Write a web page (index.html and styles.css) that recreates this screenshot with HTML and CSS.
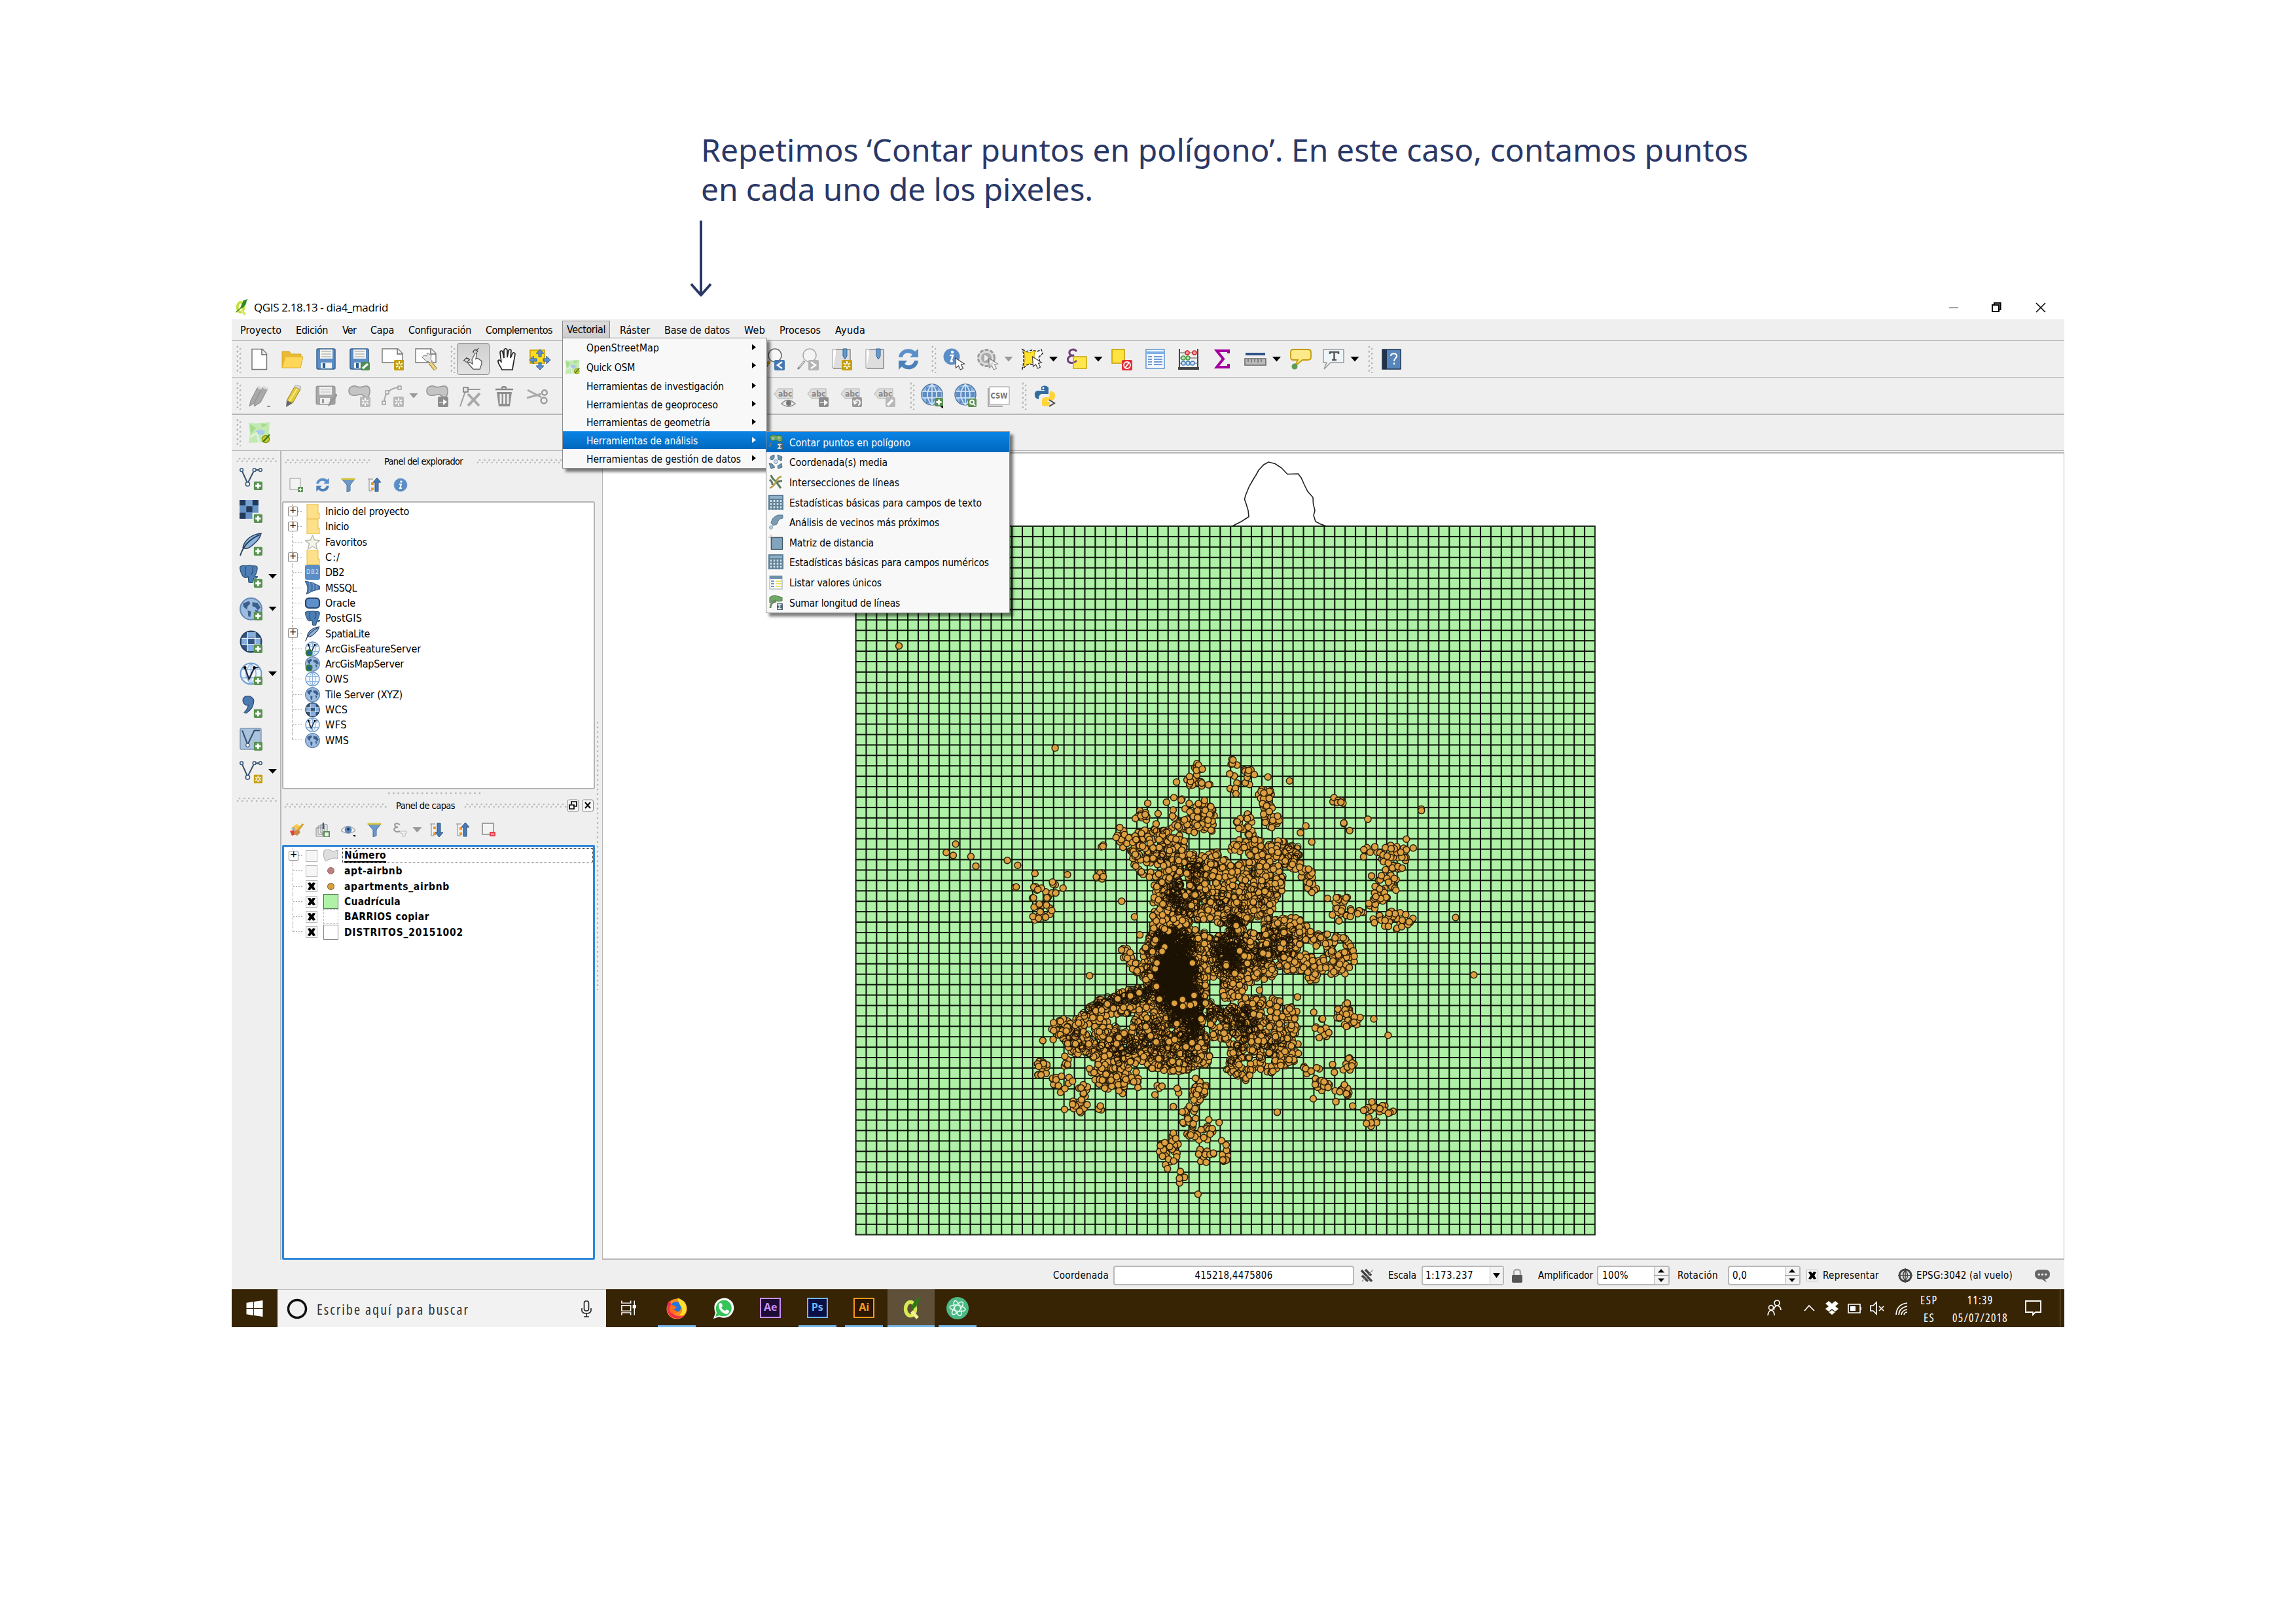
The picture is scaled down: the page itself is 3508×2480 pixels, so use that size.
FILE: index.html
```html
<!DOCTYPE html>
<html lang="es">
<head>
<meta charset="utf-8">
<title>QGIS 2.18.13 - dia4_madrid</title>
<link rel="stylesheet" href="styles.css">
</head>
<body>
<svg class="defs" aria-hidden="true">
<defs>
<symbol id="plus" viewBox="0 0 13 13"><rect width="13" height="13" rx="2" fill="#5a9152"/><path d="M6.500 2.500v8M2.500 6.500h8" stroke="#fff" stroke-width="2.800"/></symbol>
<symbol id="star" viewBox="0 0 16 16"><rect width="16" height="16" rx="2" fill="#c59f0c"/><path d="M8 2v12M3 5l10 6M13 5L3 11" stroke="#fff" stroke-width="2"/><circle cx="8" cy="8" r="2" fill="#c59f0c"/></symbol>
<symbol id="gstar" viewBox="0 0 16 16"><rect width="16" height="16" rx="2" fill="#b9b9b9"/><path d="M8 2v12M3 5l10 6M13 5L3 11" stroke="#fff" stroke-width="2"/><circle cx="8" cy="8" r="2" fill="#b9b9b9"/></symbol>
<symbol id="new" viewBox="0 0 34 34"><path d="M6 1.500h16l6.500 7V32.500H6z" fill="#fff" stroke="#777" stroke-width="1.500"/><path d="M21 2v8h7.500" fill="#eee" stroke="#666" stroke-width="1.500"/></symbol>
<symbol id="open" viewBox="0 0 34 34"><path d="M1 30V5h11l3 4h15v5" fill="#e9bb34" stroke="#d5a72a"/><path d="M1 30l5-17h27l-4 17z" fill="#ffd758" stroke="#dfb035"/></symbol>
<symbol id="save" viewBox="0 0 34 34"><rect x="3" y="1" width="28" height="31" rx="2" fill="#5b8dc6" stroke="#35628f" stroke-width="1.500"/><rect x="8" y="2" width="19" height="14" fill="#f3f3f1"/><path d="M10 5h15M10 9h15M10 13h15" stroke="#999" stroke-width="1.200"/><rect x="9" y="22" width="17" height="9" fill="#f1f1ef"/><rect x="12" y="23" width="4" height="7" fill="#2b5a94"/></symbol>
<symbol id="saveas" viewBox="0 0 34 34"><use href="#save"/><rect x="19" y="21" width="14" height="13" rx="2" fill="#4c8b51"/><path d="M22 31l8-7" stroke="#fff" stroke-width="3.500"/></symbol>
<symbol id="print" viewBox="0 0 34 34"><path d="M1 1h24l7 7v14H1z" fill="#fff" stroke="#777" stroke-width="1.400"/><path d="M24 1v8h8" fill="#eee" stroke="#666" stroke-width="1.400"/><use href="#star" x="19" y="18" width="16" height="16"/></symbol>
<symbol id="composer" viewBox="0 0 34 34"><path d="M1 1h24l7 7v14H1z" fill="#fff" stroke="#777" stroke-width="1.400"/><path d="M24 1v8h8" fill="#eee" stroke="#666" stroke-width="1.400"/><path d="M19 7l-1 5-4-1-3 3 6 6 5 1 4 4 3-3-5-5 1-6z" fill="#e5e5e5" stroke="#777"/><path d="M23 22l9 11" stroke="#8f7a35" stroke-width="6"/><path d="M23 22l9 11" stroke="#ecd47e" stroke-width="4"/></symbol>
<symbol id="touch" viewBox="0 0 34 34"><path d="M15 18l5-10q2-1 2.500 1L21 17l3-1 6 4 .5 4-3 9H17l-8-9q0-2 3-2l4 3z" fill="#fff" stroke="#555" stroke-width="1.300"/><path d="M2 20l5-5 4 3-3 4-4-1M17 7q0-5 5-4 3 2 0 5M22 4l4-5" fill="none" stroke="#333" stroke-width="1.600" stroke-dasharray="3 1"/></symbol>
<symbol id="hand" viewBox="0 0 34 34"><path d="M10 33c-2-5-7-10-6-14 2-2 4 0 5 3L7 6c1-3 4-2 4 0l2 9V3c1-3 4-3 5 0v11l2-10c1-3 4-2 4 0l-1 11 3-7c1-2 4-1 4 1-1 8-3 15-4 24z" fill="#fff" stroke="#222" stroke-width="1.700"/></symbol>
<symbol id="move" viewBox="0 0 34 34"><rect x="2" y="3" width="22" height="20" fill="#fddb1f" stroke="#c79b00" stroke-width="1.500"/><path d="M17 2l6 6h-4v5h-4V8h-4zM17 33l6-6h-4v-5h-4v5h-4zM1 18l6-6v4h5v4H7v4zM33 18l-6-6v4h-5v4h5v4z" fill="#5f90cd" stroke="#2c5a8f"/></symbol>
<symbol id="zoomlast" viewBox="0 0 34 34"><ellipse cx="17" cy="11" rx="10" ry="10" fill="#f7f7f7" stroke="#666" stroke-width="1.500"/><path d="M9 20L1 31" stroke="#555" stroke-width="4"/><path d="M9 20l-4 6" stroke="#dba20e" stroke-width="3"/><rect x="16" y="18" width="16" height="16" rx="2" fill="#4578ae"/><path d="M28 21l-7 5 7 5" fill="none" stroke="#fff" stroke-width="2.500"/></symbol>
<symbol id="zoomnext" viewBox="0 0 34 34"><ellipse cx="19" cy="11" rx="10" ry="10" fill="#f4f4f4" stroke="#aaa" stroke-width="1.500"/><path d="M11 20L1 32" stroke="#8a8a8a" stroke-width="3"/><path d="M10 21L3 29" stroke="#ddd" stroke-width="1.500"/><rect x="17" y="18" width="16" height="16" rx="2" fill="#b4b4b4"/><path d="M21 21l7 5-7 5" fill="none" stroke="#fff" stroke-width="2.500"/></symbol>
<symbol id="book" viewBox="0 0 34 34"><path d="M3 2h6v28H3z" fill="#fff" stroke="#999"/><path d="M9 2h21v29H4" fill="#dedede" stroke="#888" stroke-width="1.500"/><path d="M19 1h6v11l-3 5-3-5z" fill="#6699cc" stroke="#2f5f95"/></symbol>
<symbol id="booknew" viewBox="0 0 34 34"><use href="#book"/><use href="#star" x="17" y="18" width="16" height="16"/></symbol>
<symbol id="refresh" viewBox="0 0 34 34"><path d="M2 14C3 1 20-2 27 5l5-4v13H19l4-4C18 5 9 7 8 14z" fill="#5a8fca"/><path d="M32 19c-1 14-18 17-25 9l-5 5V19h13l-4 5c5 4 13 3 15-5z" fill="#4a7fba"/></symbol>
<symbol id="ptr" viewBox="0 0 16 20"><path d="M1 1l1 15 4-3 3 6 4-2-3-6 5-1z" fill="#fff" stroke="#444" stroke-width="1.200"/></symbol>
<symbol id="info" viewBox="0 0 34 34"><circle cx="13" cy="13" r="12.500" fill="#5b8dc7"/><circle cx="14" cy="6" r="2.200" fill="#fff"/><path d="M10 11h5l-3 9h3" stroke="#fff" stroke-width="2.500" fill="none"/><use href="#ptr" x="17" y="14" width="17" height="20"/></symbol>
<symbol id="gear" viewBox="0 0 34 34"><circle cx="15" cy="15" r="12.500" fill="#ddd" stroke="#9b9b9b" stroke-width="3" stroke-dasharray="6 2"/><circle cx="15" cy="15" r="8" fill="#aaa"/><path d="M12 10l8 5-8 5z" fill="#eee"/><g opacity=".55"><use href="#ptr" x="17" y="14" width="17" height="20"/></g></symbol>
<symbol id="select" viewBox="0 0 34 34"><path d="M2 2l6 3 9-2 8 2 6-3 2 6-6 6 2 8-4 3H10l-8 7 2-10V9z" fill="#fff" stroke="#222" stroke-dasharray="4 2" stroke-width="1.500"/><path d="M5 5l8 2 8-3-1 8 3 8-7 3-9 2-3 4 2-12z" fill="#ffe22e" stroke="#c9a500"/><use href="#ptr" x="16" y="12" width="17" height="20"/></symbol>
<symbol id="eps" viewBox="0 0 34 34"><path d="M16 5C12 0 4 2 5 8c1 3 4 4 7 3-7 0-11 4-9 9 3 4 10 3 13-1" fill="none" stroke="#71407a" stroke-width="3"/><rect x="11" y="13" width="20" height="18" fill="#ffe64d" stroke="#c9a500" stroke-width="1.500"/><path d="M16 19l-4 3" stroke="#71407a" stroke-width="2.500"/></symbol>
<symbol id="desel" viewBox="0 0 34 34"><rect x="2" y="2" width="19" height="21" fill="#ffe33e" stroke="#c29b00" stroke-width="1.500"/><rect x="17" y="18" width="16" height="16" rx="2" fill="#e32f3a"/><circle cx="25" cy="26" r="5" fill="none" stroke="#fff" stroke-width="1.800"/><path d="M22 30l6-8" stroke="#fff" stroke-width="1.800"/></symbol>
<symbol id="table" viewBox="0 0 34 34"><rect x="3" y="2" width="28" height="29" fill="#f4f9ff" stroke="#5f93cf" stroke-width="1.500"/><path d="M3 5h28v4H3z" fill="#7fb1e8"/><path d="M6 13h6M15 13h13M6 17h6M15 17h13M6 21h6M15 21h13M6 25h6M15 25h13" stroke="#6f9bd0" stroke-width="1.800"/></symbol>
<symbol id="abacus" viewBox="0 0 34 34"><path d="M3 1v31M31 1v31" stroke="#444" stroke-width="2"/><path d="M1 31h32" stroke="#444" stroke-width="4"/><path d="M3 7h28M3 15h28M3 23h28" stroke="#555"/><g stroke-width="1.500"><g fill="#f7a0a0" stroke="#d02020"><circle cx="15" cy="7" r="3"/><circle cx="26" cy="7" r="3"/></g><g fill="#b8e6b4" stroke="#4c9a47"><circle cx="9" cy="15" r="3"/><circle cx="16" cy="15" r="3"/></g><g fill="#cfe3f8" stroke="#4a80ba"><circle cx="9" cy="23" r="3"/><circle cx="16" cy="23" r="3"/><circle cx="23" cy="23" r="3"/></g></g></symbol>
<symbol id="sigma" viewBox="0 0 34 34"><path d="M27 8V4H9l10 12.500L9 29h18v-5" fill="none" stroke="#a3009f" stroke-width="4"/></symbol>
<symbol id="measure" viewBox="0 0 34 34"><path d="M2 9h30" stroke="#2f5488" stroke-width="4"/><rect x="1" y="16" width="32" height="10" fill="#bbb" stroke="#666" stroke-width="1.500"/><path d="M6 17v4M11 17v5M16 17v4M21 17v5M26 17v4" stroke="#444"/></symbol>
<symbol id="bubble" viewBox="0 0 34 34"><path d="M6 2h22q5 0 5 4v8q0 4-5 4h-8L8 28l5-10H6q-4 0-4-4V6q0-4 4-4z" fill="#fbe98a" stroke="#c39b0a" stroke-width="1.800"/><circle cx="8" cy="28" r="4.500" fill="#5f9d55"/></symbol>
<symbol id="tbox" viewBox="0 0 34 34"><path d="M1 2h31v20H12L2 32l4-10H1z" fill="#edf5f9" stroke="#999" stroke-width="1.500"/><path d="M11 9V6h13v3M17.500 6v12M14 18h7" fill="none" stroke="#555" stroke-width="2.500"/></symbol>
<symbol id="help" viewBox="0 0 34 34"><rect x="3" y="2" width="28" height="30" fill="#5685bb" stroke="#1e3450" stroke-width="1.500"/><rect x="3" y="2" width="7" height="30" fill="#22324a"/><path d="M16 12c0-5 9-5 9 0 0 4-4 3-4 8M21 22v3" stroke="#fff" stroke-width="2.200" fill="none"/></symbol>
<symbol id="pencils" viewBox="0 0 34 34"><g fill="#a9a9a9" stroke="#888"><path d="M2 33l2-9L15 3l6 3-10 21z"/><path d="M9 33l2-9L23 3l7 3-11 21z"/></g><path d="M15 3l6 3M23 3l7 3" stroke="#ddd" stroke-width="4"/><path d="M28 32h9l-4.500 4z" fill="#888"/></symbol>
<symbol id="pencil" viewBox="0 0 34 34"><path d="M8 24L20 3l9 4-12 21z" fill="#e2c93c" stroke="#9b8413"/><path d="M12 25L24 6" stroke="#f8ec8e" stroke-width="2"/><path d="M8 24l9 4-10 6z" fill="#666"/><path d="M20 3l2-3 8 3-1 4z" fill="#ddd" stroke="#aaa"/></symbol>
<symbol id="gsave" viewBox="0 0 34 34"><rect x="2" y="2" width="29" height="28" rx="2" fill="#a8a8a8" stroke="#888"/><rect x="7" y="3" width="19" height="12" fill="#eee"/><path d="M9 7h15M9 11h15" stroke="#bbb"/><rect x="8" y="20" width="15" height="9" fill="#eee"/><rect x="11" y="22" width="3" height="6" fill="#999"/><path d="M20 33l2-6 9-14 4 2-9 15z" fill="#999"/></symbol>
<symbol id="poly" viewBox="0 0 34 34"><path d="M1 9C1 3 8 0 14 3c7 2 10-2 15-1 6 2 5 14 0 17-6 1-5-6-12-4C10 17 1 18 1 9z" fill="#c4c4c4" stroke="#929292" stroke-width="1.500"/></symbol>
<symbol id="polyadd" viewBox="0 0 34 34"><use href="#poly"/><use href="#gstar" x="18" y="18" width="16" height="16"/></symbol>
<symbol id="curve" viewBox="0 0 34 34"><path d="M4 27C4 12 14 5 26 4" fill="none" stroke="#aaa" stroke-width="2"/><g fill="#eee" stroke="#999" stroke-width="1.400"><rect x="1" y="25" width="5" height="5"/><rect x="6" y="9" width="5" height="5"/><rect x="25" y="2" width="5" height="5"/></g><use href="#gstar" x="18" y="18" width="16" height="16"/></symbol>
<symbol id="polymove" viewBox="0 0 34 34"><use href="#poly"/><rect x="18" y="18" width="16" height="16" rx="2" fill="#8d8d8d"/><path d="M20 26h6v-4l6 4-6 5v-4h-6z" fill="#fff"/></symbol>
<symbol id="node" viewBox="0 0 34 34"><path d="M1 33L10 7H32" fill="none" stroke="#999" stroke-width="1.800"/><rect x="6" y="4" width="7" height="7" fill="#e5e5e5" stroke="#777" stroke-width="1.500"/><path d="M13 14l17 18M31 13L13 32" stroke="#aaa" stroke-width="4"/></symbol>
<symbol id="trash" viewBox="0 0 34 34"><path d="M4 7h27M13 5q4-4 8 0" fill="none" stroke="#888" stroke-width="2.500"/><path d="M6 11h23l-3 22H9z" fill="#8f8f8f"/><path d="M12 14v15M17.500 14v15M23 14v15" stroke="#eee" stroke-width="3"/></symbol>
<symbol id="cut" viewBox="0 0 34 34"><path d="M2 8l21 11M1 20l22-6" stroke="#aaa" stroke-width="3"/><g fill="none" stroke="#999" stroke-width="2.400"><circle cx="28" cy="12" r="3.800"/><circle cx="27" cy="24" r="4.500"/></g></symbol>
<symbol id="tag" viewBox="0 0 34 34"><path d="M7 6h22v15H7l-6-7z" fill="#ddd" stroke="#b0b0b0"/><text x="7" y="18" font-size="12" font-weight="bold" fill="#888" class="ui">abc</text></symbol>
<symbol id="tageye" viewBox="0 0 34 34"><use href="#tag"/><path d="M12 29q10-11 21 0-10 8-21 0z" fill="#eee" stroke="#888" stroke-width="1.500"/><circle cx="23" cy="28" r="4" fill="#777"/></symbol>
<symbol id="tagmove" viewBox="0 0 34 34"><use href="#tag"/><rect x="18" y="19" width="15" height="15" rx="2" fill="#8d8d8d"/><path d="M20 27h6v-4l6 4-6 5v-4h-6z" fill="#fff"/></symbol>
<symbol id="tagrot" viewBox="0 0 34 34"><use href="#tag"/><rect x="18" y="19" width="15" height="15" rx="2" fill="#9a9a9a"/><path d="M22 28a4 4 0 1 1 5 3M20 24l2 5 4-3" stroke="#fff" stroke-width="2" fill="none"/></symbol>
<symbol id="tagedit" viewBox="0 0 34 34"><use href="#tag"/><rect x="18" y="19" width="15" height="15" rx="2" fill="#b9b9b9"/><path d="M21 31l8-8" stroke="#fff" stroke-width="3.500"/></symbol>
<symbol id="globe" viewBox="0 0 34 34"><circle cx="17" cy="17" r="16" fill="#8db9ea" stroke="#54779f" stroke-width="1.500"/><path d="M8 5h18v7H8zM3 13h28v8H3zM8 23h18v7H8z" fill="#4f7cb0" opacity=".7"/><path d="M17 1v32M2 12h30M2 22h30M17 1q-14 16 0 32M17 1q14 16 0 32" fill="none" stroke="#d3e4f7" stroke-width="1.700"/></symbol>
<symbol id="globeadd" viewBox="0 0 34 38"><use href="#globe" width="34" height="34"/><use href="#plus" x="21" y="22" width="13" height="13"/><path d="M29 34h8l-4 4z" fill="#000"/></symbol>
<symbol id="globefind" viewBox="0 0 34 38"><use href="#globe" width="34" height="34"/><rect x="21" y="23" width="13" height="13" rx="2" fill="#5a9152"/><circle cx="27" cy="28.500" r="3" fill="none" stroke="#fff" stroke-width="1.800"/><path d="M29 31l3 3" stroke="#fff" stroke-width="1.800"/></symbol>
<symbol id="csw" viewBox="0 0 34 34"><path d="M1 5v28h22" fill="#ddd" stroke="#aaa" stroke-width="2"/><rect x="3" y="3" width="30" height="27" fill="#fff" stroke="#999"/><text x="4.500" y="21" font-size="12" font-weight="bold" textLength="26" lengthAdjust="spacingAndGlyphs" fill="#777" class="ui">CSW</text></symbol>
<symbol id="py" viewBox="0 0 34 34"><path d="M11 3q6-4 11 1v10H11q-4 1-4 8-7-1-6-9 1-4 5-4h10V8h-5z" fill="#336d9f"/><circle cx="14" cy="5" r="1.500" fill="#fff"/><path d="M24 10q9-1 8 8-1 6-6 6h-6v2h4v5q-6 4-12 0v-8q1-4 5-4h6z" fill="#ffd43b"/><path d="M23 23l8 5-8 5" fill="none" stroke="#444" stroke-width="2"/></symbol>
<symbol id="osm" viewBox="0 0 34 34"><path d="M1 2l10 1 10-1 12-1-1 14 1 17H16L1 33l2-15z" fill="#c3e9b2"/><path d="M3 4l9 6-8 9zM20 3l10 2-9 4z" fill="#a3dc8d"/><path d="M12 15q7-5 14 0l-3 6-7-2-3 8z" fill="#a9c8ee"/><path d="M3 24l10-6 4 13" stroke="#dff4d7" stroke-width="3" fill="none"/><circle cx="27" cy="27" r="5.500" fill="#c9cf35" stroke="#8a8f10" stroke-width="1.500"/><path d="M23 31L33 20" stroke="#397c23" stroke-width="2.500"/></symbol>
<symbol id="qgis" viewBox="0 0 20 26"><ellipse cx="8.500" cy="13" rx="5" ry="8" fill="#fbfde0" stroke="#c6df3b" stroke-width="4"/><path d="M10 18l6 7" stroke="#d9e96a" stroke-width="4"/><path d="M20 0l-7 2-5 12 2 1q8-5 8-12z" fill="#2f8a1c"/><path d="M1 21l8-7" stroke="#3f7a1c" stroke-width="1.500"/></symbol>
<symbol id="v" viewBox="0 0 34 34"><path d="M3 4l9 20L22 4h9" fill="none" stroke="#37506c" stroke-width="2"/><g fill="#fff" stroke="#3c5c80" stroke-width="1.600"><circle cx="3" cy="4" r="2.300"/><circle cx="12" cy="25" r="3"/><circle cx="22" cy="4" r="2.300"/><circle cx="31" cy="4" r="2.300"/></g></symbol>
<symbol id="vadd" viewBox="0 0 34 34"><use href="#v"/><use href="#plus" x="21" y="21" width="13" height="13"/></symbol>
<symbol id="vnew" viewBox="0 0 34 34"><use href="#v"/><use href="#star" x="21" y="21" width="13" height="13"/></symbol>
<symbol id="raster" viewBox="0 0 34 34"><rect width="28" height="28" fill="#6592c4"/><path d="M0 0h9v8H0zM19 0h9v8h-9zM10 9h9v9h-9zM0 19h9v9H0z" fill="#22395a"/><path d="M9 0h10v9H9z" fill="#79a3d2"/><path d="M19 19h9v9h-9z" fill="#efefef"/><use href="#plus" x="21" y="21" width="13" height="13"/></symbol>
<symbol id="feather" viewBox="0 0 34 34"><path d="M32 1C16 3 7 12 5 22 10 26 16 22 22 16 29 10 31 6 32 1z" fill="#8fb4dc" stroke="#26405f" stroke-width="1.500"/><path d="M1 34C5 20 14 10 30 3" fill="none" stroke="#243c5a" stroke-width="1.800"/></symbol>
<symbol id="featheradd" viewBox="0 0 34 34"><use href="#feather"/><use href="#plus" x="21" y="21" width="13" height="13"/></symbol>
<symbol id="eleph" viewBox="0 0 34 34"><path d="M1 4Q5 0 12 2q6-2 12 0 9-1 9 4-1 10-5 15l6 1q-3 4-8 3l-1 7q-4 4-8 0l-1-10q-8 4-11-3Q0 10 1 4z" fill="#4d7fb5" stroke="#284a72" stroke-width="1.500"/><path d="M12 3q-3 9 0 17M24 3q3 9-3 16" stroke="#27476c" fill="none" stroke-width="1.500"/></symbol>
<symbol id="elephadd" viewBox="0 0 34 34"><g transform="scale(.8)"><use href="#eleph" width="34" height="34"/></g><use href="#plus" x="21" y="21" width="13" height="13"/></symbol>
<symbol id="world" viewBox="0 0 34 34"><circle cx="17" cy="17" r="16" fill="#9dbde0" stroke="#6288b4" stroke-width="2"/><path d="M5 9l9-4 2 4-4 4-1 5-5-4zM19 7l8 1 4 7-4 4-4-5-4-1zM12 19l5 2-1 8-3-1zM23 18l5 2-3 6z" fill="#3c5f89"/></symbol>
<symbol id="worldadd" viewBox="0 0 34 34"><use href="#world"/><use href="#plus" x="21" y="21" width="13" height="13"/></symbol>
<symbol id="wcs" viewBox="0 0 34 34"><circle cx="17" cy="17" r="15.500" fill="#2f5580" stroke="#24415f" stroke-width="2"/><path d="M12 3h10v8H12zM3 12h9v9H3zM23 12h8v9h-8zM12 22h11v9H12z" fill="#85aede"/><path d="M3 12h28M3 21h28M12 3v28M23 3v28" stroke="#e6eef7" stroke-width="1.400"/></symbol>
<symbol id="wcsadd" viewBox="0 0 34 34"><use href="#wcs"/><use href="#plus" x="21" y="21" width="13" height="13"/></symbol>
<symbol id="ows" viewBox="0 0 34 34"><circle cx="17" cy="17" r="15.500" fill="#f2f8ff" stroke="#6d9acb" stroke-width="2"/><path d="M17 2v30M3 11h28M3 23h28M17 2q-15 15 0 30M17 2q15 15 0 30" fill="none" stroke="#8db4e0" stroke-width="1.500"/></symbol>
<symbol id="wfs" viewBox="0 0 34 34"><use href="#ows"/><path d="M8 8l6 17L22 8h6" fill="none" stroke="#222f40" stroke-width="2.200"/><circle cx="8" cy="8" r="2.200"/><circle cx="22" cy="8" r="2.200"/></symbol>
<symbol id="wfsadd" viewBox="0 0 34 34"><use href="#wfs"/><use href="#plus" x="21" y="21" width="13" height="13"/></symbol>
<symbol id="comma" viewBox="0 0 34 34"><path d="M6 12Q3 5 9 2q8-2 12 5 1 12-11 20l-3-1q5-5 6-11-4 1-7-3z" fill="#4b7ab0" stroke="#2c5078" stroke-width="1.300"/><use href="#plus" x="21" y="21" width="13" height="13"/></symbol>
<symbol id="virt" viewBox="0 0 34 34"><rect x="1" y="1" width="31" height="31" rx="2" fill="#a9c3df" stroke="#7f97b0" stroke-width="1.500"/><path d="M4 4l8 21L22 4h8" fill="none" stroke="#37506c" stroke-width="2"/><circle cx="12" cy="26" r="2.600" fill="#fff" stroke="#37506c"/><use href="#plus" x="21" y="21" width="13" height="13"/></symbol>
<symbol id="sqadd" viewBox="0 0 22 22"><rect x="1" y="1" width="16" height="17" fill="#f3f3f3" stroke="#999"/><rect x="13" y="14" width="8" height="8" rx="1" fill="#5a9152"/><path d="M17 15.500v5M14.500 18h5" stroke="#fff" stroke-width="1.500"/></symbol>
<symbol id="sqdel" viewBox="0 0 22 22"><rect x="1" y="1" width="17" height="17" fill="#f3f3f3" stroke="#777" stroke-width="1.300"/><rect x="12" y="14" width="9" height="7" rx="1" fill="#e9414d"/><path d="M14 17.500h5" stroke="#fff" stroke-width="1.500"/></symbol>
<symbol id="filter" viewBox="0 0 22 22"><path d="M1 2h20l-7 9v9l-5 2V11z" fill="#6c98ca" stroke="#47709f"/><path d="M1 1h20v2H1z" fill="#f0e040" stroke="#a99b20" stroke-width=".6"/></symbol>
<symbol id="up" viewBox="0 0 22 22"><path d="M1 2h8M3 2v18h5" stroke="#888" fill="none"/><path d="M6 7h4v4H6zM6 15h4v4H6z" fill="#f39a1f"/><path d="M15 0l6 7h-4v14h-5V7H9z" fill="#4a79b2" stroke="#2b5282"/></symbol>
<symbol id="down" viewBox="0 0 22 22"><path d="M1 2h8M3 2v18h5" stroke="#888" fill="none"/><path d="M6 6h4v4H6zM6 15h4v4H6z" fill="#f39a1f"/><path d="M15 22l6-7h-4V1h-5v14H9z" fill="#4a79b2" stroke="#2b5282"/></symbol>
<symbol id="i" viewBox="0 0 22 22"><circle cx="11" cy="11" r="10" fill="#5b8dc7" stroke="#7aa3d3"/><circle cx="12" cy="6" r="1.700" fill="#fff"/><path d="M9 10h3l-2 6h3" stroke="#fff" stroke-width="2" fill="none"/></symbol>
<symbol id="brush" viewBox="0 0 22 22"><path d="M3 8l8-6 8 5-8 8z" fill="#f8c94e"/><path d="M1 13l6-2 3 7-6 2z" fill="#e0463b"/><path d="M3 9l5-2v5z" fill="#78a8e0"/><path d="M9 12l5-2 3 5-5 5-5-3z" fill="#c88a48"/><path d="M14 11l7-9" stroke="#d6a035" stroke-width="3"/></symbol>
<symbol id="group" viewBox="0 0 22 22"><path d="M1 8h10v13H1zM4 5h10v13H4zM8 3h10v13H8z" fill="#e9e9e9" stroke="#888"/><path d="M12 0v10" stroke="#2f5f95" stroke-width="2.500"/><rect x="13" y="14" width="8" height="8" fill="#e9f2e7" stroke="#5a9152" stroke-width="2"/></symbol>
<symbol id="eye" viewBox="0 0 22 22"><path d="M0 12Q11-1 22 12 11 20 0 12z" fill="#fff" stroke="#aaa" stroke-width="1.500"/><circle cx="11" cy="11" r="5.500" fill="#5b88bb"/><circle cx="11" cy="10" r="2" fill="#1f324a"/><path d="M18 19h7l-3.500 3z" /></symbol>
<symbol id="epsf" viewBox="0 0 22 22"><path d="M10 3Q3-1 2 4q1 3 5 3-6 0-6 4 3 5 9 2" fill="none" stroke="#999" stroke-width="2"/><path d="M11 13h9v3l-2 1v4h-4v-4l-3-1z" fill="#eee" stroke="#bbb"/></symbol>
<symbol id="folder" viewBox="0 0 23 23"><path d="M3 0h17v23H3z" fill="#ffe08a" stroke="#e5b93c"/><path d="M20 14h2v9h-4" fill="#ffe08a" stroke="#e5b93c"/></symbol>
<symbol id="fav" viewBox="0 0 23 23"><path d="M11.500 1l3 7 8 1-6 5 2 8-7-4-7 4 2-8-6-5 8-1z" fill="#f4f4ec" stroke="#b5b8a6" stroke-width="1.400"/></symbol>
<symbol id="db2" viewBox="0 0 23 23"><rect width="23" height="23" rx="3" fill="#5b8dc7"/><text x="2" y="14" font-size="9" textLength="19" fill="#dce8f6" class="ui">DB2</text></symbol>
<symbol id="mssql" viewBox="0 0 23 23"><path d="M0 1q12 1 23 8v4Q12 15 2 21q5-10-2-20z" fill="#4a78ae" stroke="#2f547f"/><path d="M6 2q4 8 0 16M12 4q3 6 0 11M18 7v6" stroke="#9dbce0" fill="none"/></symbol>
<symbol id="oracle" viewBox="0 0 23 23"><rect x="1" y="4" width="21" height="15" rx="5" fill="#5e90cb" stroke="#27486d" stroke-width="2.200"/></symbol>
<symbol id="arcf" viewBox="0 0 34 34"><use href="#wfs"/><circle cx="9" cy="26" r="8" fill="#2f7a3a"/><path d="M4 24l6-3 4 6-6 4z" fill="#2a5c9c"/></symbol>
<symbol id="arcm" viewBox="0 0 34 34"><use href="#world"/><circle cx="9" cy="26" r="8" fill="#2f7a3a"/><path d="M4 24l6-3 4 6-6 4z" fill="#2a5c9c"/></symbol>
<symbol id="blob" viewBox="0 0 23 20"><path d="M1 2q6-4 11 0 5 2 10-1v13q-6-2-9 0-7 2-10 4Q-1 10 1 2z" fill="#dedede" stroke="#aaa"/></symbol>
<symbol id="count" viewBox="0 0 23 23"><path d="M2 3Q8-1 12 2q6-2 9 1v7l-5 1-4-3-7 2z" fill="#6fa765" stroke="#45713e"/><path d="M4 12l-2 7" stroke="#5d7384" stroke-width="3"/><circle cx="7" cy="6" r="2" fill="#9fc796"/><circle cx="16" cy="5" r="2" fill="#9fc796"/><rect x="13" y="13" width="9" height="10" fill="#4e6472"/><path d="M20 15h-5l3 3-3 3h5" stroke="#fff" fill="none" stroke-width="1.300"/></symbol>
<symbol id="mean" viewBox="0 0 23 23"><g fill="#6f92ab" stroke="#4c6c84"><path d="M2 7l2-4 5-2v5l-3 3zM14 1l7 3-1 6-5-2zM1 14l5 1 4 5-6 2zM20 14l1 6-6 2-1-4z"/></g><circle cx="11.500" cy="11.500" r="3" fill="#cfe0ec" stroke="#6f92ab"/></symbol>
<symbol id="inter" viewBox="0 0 23 23"><path d="M4 1q2 6 7 9l8 11M13 12q3-2 8-2M2 8q5 4 4 8" stroke="#5d7a58" stroke-width="3" fill="none"/><path d="M2 21q8-4 10-11 3-6 8-7" stroke="#b09b45" stroke-width="2.500" fill="none"/></symbol>
<symbol id="calc" viewBox="0 0 23 23"><rect width="23" height="23" fill="#5f7f97"/><path d="M2 2h19v4H2z" fill="#8eb0c8"/><path d="M4 8v15M9 8v15M14 8v15M19 8v15" stroke="#d6e3ec" stroke-width="2.600" stroke-dasharray="3 1.800"/></symbol>
<symbol id="near" viewBox="0 0 23 23"><path d="M4 13L6 7q4-5 9-6h7v5q-5 0-7 4l-2 5-6 2z" fill="#7b9bb2" stroke="#5b7990"/><circle cx="4" cy="20" r="2.500" fill="#bcd2e2" stroke="#7b9bb2"/></symbol>
<symbol id="matrix" viewBox="0 0 23 23"><path d="M0 4h22M4 0v22" stroke="#aaa"/><rect x="4.500" y="4.500" width="17" height="18" fill="#82a4bd" stroke="#3f5768" stroke-width="1.300"/></symbol>
<symbol id="list" viewBox="0 0 23 23"><rect x="2" y="2" width="19" height="20" fill="#fff" stroke="#8fa3b3"/><path d="M2 2h19v5H2z" fill="#6f92ab"/><path d="M4 10h5M4 14h5M4 18h5" stroke="#7a94a8" stroke-width="2"/><path d="M11 10h9M11 14h9M11 18h9" stroke="#e8df70" stroke-width="2"/></symbol>
<symbol id="sum" viewBox="0 0 23 23"><path d="M2 4q6-5 12-2l7 2v5l-6 1-5-2-8 4z" fill="#6fa765" stroke="#45713e"/><path d="M3 20q0-9 9-10" stroke="#6d8a68" stroke-width="3" fill="none"/><rect x="13" y="13" width="9" height="10" fill="#4e6472"/><path d="M20 15h-5l3 3-3 3h5" stroke="#fff" fill="none" stroke-width="1.300"/></symbol>
</defs>
</svg>

<div class="note">
  <p><span data-w="1600">Repetimos ‘Contar puntos en polígono’. En este caso, contamos puntos</span></p>
  <p><span data-w="599">en cada uno de los pixeles.</span></p>
  <svg class="arrow" width="34" height="118" viewBox="0 0 34 118"><path d="M17 0v114M2 97l15 17 15-17" fill="none" stroke="#2a3866" stroke-width="4"/></svg>
</div>

<div class="window">
  <div class="titlebar">
    <svg class="logo"><use href="#qgis"/></svg>
    <span class="caption" data-w="205">QGIS 2.18.13 - dia4_madrid</span>
    <svg class="winbtns" width="150" height="16" viewBox="0 0 150 16" fill="none" stroke="#000"><path d="M0 8.500h14"/><path d="M66 4h10v10H66zM69 4V1h9.500v10H76" stroke-width="2"/><path d="M133 1l14 14M147 1l-14 14" stroke-width="1.500"/></svg>
  </div>
  <div class="menubar">
    <span><b data-w="63">Proyecto</b></span><span><b data-w="49">Edición</b></span><span><b data-w="21">Ver</b></span><span><b data-w="36">Capa</b></span><span><b data-w="96">Configuración</b></span><span><b data-w="102">Complementos</b></span><span class="active"><b data-w="59">Vectorial</b></span><span><b data-w="46">Ráster</b></span><span><b data-w="100">Base de datos</b></span><span><b data-w="32">Web</b></span><span><b data-w="63">Procesos</b></span><span><b data-w="46">Ayuda</b></span>
  </div>
  <div class="toolbar">
    <i class="handle"></i>
    <svg><use href="#new"/></svg><svg><use href="#open"/></svg><svg><use href="#save"/></svg><svg><use href="#saveas"/></svg><svg><use href="#print"/></svg><svg><use href="#composer"/></svg>
    <i class="handle mid"></i>
    <svg class="pressed"><use href="#touch"/></svg><svg><use href="#hand"/></svg><svg><use href="#move"/></svg>
    <i class="gap1"></i>
    <svg><use href="#zoomlast"/></svg><svg><use href="#zoomnext"/></svg><svg><use href="#booknew"/></svg><svg><use href="#book"/></svg><svg><use href="#refresh"/></svg>
    <i class="handle mid2"></i>
    <svg><use href="#info"/></svg><svg><use href="#gear"/></svg><i class="dd off"></i><svg><use href="#select"/></svg><i class="dd"></i><svg><use href="#eps"/></svg><i class="dd"></i><svg><use href="#desel"/></svg><svg><use href="#table"/></svg><svg><use href="#abacus"/></svg><svg><use href="#sigma"/></svg><svg><use href="#measure"/></svg><i class="dd"></i><svg><use href="#bubble"/></svg><svg><use href="#tbox"/></svg><i class="dd"></i>
    <i class="handle mid3"></i>
    <svg><use href="#help"/></svg>
  </div>
  <div class="toolbar second">
    <i class="handle"></i>
    <svg><use href="#pencils"/></svg><svg><use href="#pencil"/></svg><svg><use href="#gsave"/></svg><svg><use href="#polyadd"/></svg><svg><use href="#curve"/></svg><i class="dd off"></i><svg><use href="#polymove"/></svg><svg><use href="#node"/></svg><svg><use href="#trash"/></svg><svg><use href="#cut"/></svg>
    <i class="gap2"></i>
    <svg><use href="#tageye"/></svg><svg><use href="#tagmove"/></svg><svg><use href="#tagrot"/></svg><svg><use href="#tagedit"/></svg>
    <i class="handle mid"></i>
    <svg class="tall"><use href="#globeadd"/></svg><svg class="tall"><use href="#globefind"/></svg><svg><use href="#csw"/></svg>
    <i class="handle mid3"></i>
    <svg><use href="#py"/></svg>
  </div>
  <div class="toolbar third"><i class="handle"></i><svg><use href="#osm"/></svg></div>

  <div class="body">
    <div class="side">
      <i class="hdots"></i>
      <div><svg><use href="#vadd"/></svg></div><div><svg><use href="#raster"/></svg></div><div><svg><use href="#featheradd"/></svg></div><div><svg><use href="#elephadd"/></svg><i class="dd"></i></div><div><svg><use href="#worldadd"/></svg><i class="dd"></i></div><div><svg><use href="#wcsadd"/></svg></div><div><svg><use href="#wfsadd"/></svg><i class="dd"></i></div><div><svg><use href="#comma"/></svg></div><div><svg><use href="#virt"/></svg></div><div><svg><use href="#vnew"/></svg><i class="dd"></i></div>
      <i class="hdots last"></i>
    </div>
    <div class="docks">
      <div class="dock-title"><i class="hdots"></i><b data-w="120">Panel del explorador</b><i class="hdots"></i></div>
      <div class="tools"><svg><use href="#sqadd"/></svg><svg><use href="#refresh"/></svg><svg><use href="#filter"/></svg><svg><use href="#up"/></svg><svg><use href="#i"/></svg></div>
      <div class="tree browser">
        <div class="row exp"><svg><use href="#folder"/></svg><b data-w="128">Inicio del proyecto</b></div>
        <div class="row exp"><svg><use href="#folder"/></svg><b data-w="36">Inicio</b></div>
        <div class="row"><svg><use href="#fav"/></svg><b data-w="64">Favoritos</b></div>
        <div class="row exp"><svg><use href="#folder"/></svg><b data-w="23">C:/</b></div>
        <div class="row"><svg><use href="#db2"/></svg><b data-w="29">DB2</b></div>
        <div class="row"><svg><use href="#mssql"/></svg><b data-w="48">MSSQL</b></div>
        <div class="row"><svg><use href="#oracle"/></svg><b data-w="46">Oracle</b></div>
        <div class="row"><svg><use href="#eleph"/></svg><b data-w="56">PostGIS</b></div>
        <div class="row exp"><svg><use href="#feather"/></svg><b data-w="68">SpatiaLite</b></div>
        <div class="row"><svg><use href="#arcf"/></svg><b data-w="146">ArcGisFeatureServer</b></div>
        <div class="row"><svg><use href="#arcm"/></svg><b data-w="120">ArcGisMapServer</b></div>
        <div class="row"><svg><use href="#ows"/></svg><b data-w="36">OWS</b></div>
        <div class="row"><svg><use href="#world"/></svg><b data-w="118">Tile Server (XYZ)</b></div>
        <div class="row"><svg><use href="#wcs"/></svg><b data-w="34">WCS</b></div>
        <div class="row"><svg><use href="#wfs"/></svg><b data-w="33">WFS</b></div>
        <div class="row end"><svg><use href="#world"/></svg><b data-w="36">WMS</b></div>
      </div>
      <i class="splitter"></i>
      <div class="dock-title layers-title"><i class="hdots"></i><b data-w="90">Panel de capas</b><i class="hdots"></i>
        <svg width="42" height="20" viewBox="0 0 42 20" fill="none"><rect x="1" y="1" width="17" height="18" rx="3" fill="#f6f6f6" stroke="#888"/><rect x="23.500" y="1" width="17" height="18" rx="3" fill="#f6f6f6" stroke="#888"/><path d="M4 9h7v6H4zM7 8V4h8v7h-3" stroke="#000" stroke-width="1.700"/><path d="M28 5l8 9M36 5l-8 9" stroke="#000" stroke-width="2"/></svg></div>
      <div class="tools"><svg><use href="#brush"/></svg><svg><use href="#group"/></svg><svg class="over"><use href="#eye"/></svg><svg><use href="#filter"/></svg><svg class="tight"><use href="#epsf"/></svg><i class="dd off"></i><svg><use href="#down"/></svg><svg><use href="#up"/></svg><svg><use href="#sqdel"/></svg></div>
      <div class="tree layers">
        <div class="row exp"><i class="chk off"></i><svg><use href="#blob"/></svg><b class="current"><u data-w="64">Número</u></b></div>
        <div class="row"><i class="chk off"></i><i class="sym dot pink"></i><b data-w="89">apt-airbnb</b></div>
        <div class="row"><i class="chk"></i><i class="sym dot"></i><b data-w="161">apartments_airbnb</b></div>
        <div class="row"><i class="chk"></i><i class="sym green"></i><b data-w="86">Cuadrícula</b></div>
        <div class="row"><i class="chk"></i><i class="sym dash"></i><b data-w="130">BARRIOS copiar</b></div>
        <div class="row end"><i class="chk"></i><i class="sym"></i><b data-w="182">DISTRITOS_20151002</b></div>
      </div>
    </div>
    <div class="vsplit"><i></i></div>
    <div class="canvas">
      <svg id="map" width="2233" height="1231" viewBox="921.500 693 2233 1231">
        <defs><pattern id="grid" x="1308" y="804" width="15.908" height="15.922" patternUnits="userSpaceOnUse"><path d="M0 0V16M15.908 0V16M0 0H16M0 15.922H16" stroke="#0a1508" stroke-width="2.100"/></pattern></defs>
        <path d="M1884 803.500L1897 797 1908.500 789.500 1907.500 780 1904.500 770 1902 763 1903.500 757 1909 743.500 1915 733 1920 725 1923.500 718.500 1931.500 710 1938.500 706 1948.500 708.500 1958.500 715 1967.500 724.500 1984 724 1988.500 730 1993.500 741 1998.500 751 2006.500 760 2007 770 2009.500 780 2007.500 787.500 2010.500 797 2018.500 801 2026 803.500" fill="none" stroke="#222" stroke-width="1.600"/>
        <rect x="1308" y="804" width="1129.500" height="1082.700" fill="#b0f1a8"/>
        <rect x="1307" y="803" width="1131" height="1084.500" fill="url(#grid)"/>
        <rect x="1308" y="804" width="1129.500" height="1082.700" fill="none" stroke="#24301f" stroke-width="1.500"/>
        <g id="points"></g>
      </svg>
    </div>
  </div>

  <div class="status">
    <b data-w="85">Coordenada</b>
    <span class="field coord"><b data-w="119">415218,4475806</b></span>
    <svg class="track" viewBox="0 0 22 22"><path d="M2 3l16 17M3 11l9 9M8 2l9 9" stroke="#444" stroke-width="3.500"/><path d="M3 20L20 2" stroke="#888" stroke-width="1.500" stroke-dasharray="3 1"/></svg>
    <b data-w="43">Escala</b>
    <span class="field scale"><b data-w="73">1:173.237</b><i class="dd"></i></span>
    <svg class="lock" viewBox="0 0 20 22"><path d="M5 11V6q0-4 5-4t5 4v5" fill="none" stroke="#aaa" stroke-width="2.500"/><rect x="2" y="10" width="16" height="12" rx="2" fill="#555"/></svg>
    <b data-w="84">Amplificador</b>
    <span class="field mag"><b data-w="40">100%</b><i class="spin"></i></span>
    <b data-w="62">Rotación</b>
    <span class="field rot"><b data-w="22">0,0</b><i class="spin"></i></span>
    <i class="chk"></i><b class="rep" data-w="86">Representar</b>
    <svg class="crs" viewBox="0 0 22 22"><circle cx="11" cy="11" r="9" fill="#ddd" stroke="#444" stroke-width="3"/><path d="M11 0v22M0 11h22M11 3q-7 8 0 16M11 3q7 8 0 16" stroke="#444" fill="none" stroke-width="1.500"/></svg>
    <b data-w="147">EPSG:3042 (al vuelo)</b>
    <svg class="msg" viewBox="0 0 26 22"><path d="M8 2h10q7 0 7 7t-7 8h-1l3 5-8-5H8q-7-1-7-8t7-7z" fill="#666"/><path d="M6 9.500h3M11.500 9.500h3M17 9.500h3" stroke="#fff" stroke-width="2.500"/></svg>
  </div>

  <div class="taskbar">
    <svg class="start" viewBox="0 0 26 26"><path d="M0 4l11-2v10.500H0zM12 2l14-2v12.500H12zM0 13.500h11V24L0 22zM12 13.500h14V26l-14-2z" fill="#fff"/></svg>
    <div class="search">
      <svg width="32" height="32" viewBox="0 0 32 32"><circle cx="16" cy="16" r="13.500" fill="none" stroke="#111" stroke-width="3.500"/></svg>
      <b data-w="233">Escribe aquí para buscar</b>
      <svg class="mic" width="16" height="26" viewBox="0 0 16 26" fill="none" stroke="#222" stroke-width="1.600"><rect x="4.500" y="1" width="7" height="15" rx="3"/><path d="M1 12v4q1 4 7 4t7-4v-4M8 20v5M4 25h8"/></svg>
    </div>
    <div class="app view"><svg viewBox="0 0 26 26" fill="none" stroke="#fff" stroke-width="1.600"><path d="M2 1v4h15V1M2 9h15v9H2zM2 25v-4h15v4M23 1v24"/><path d="M21 9h4v4h-4z" fill="#fff"/></svg></div>
    <div class="app run"><svg viewBox="0 0 34 34"><circle cx="17" cy="18" r="15.500" fill="#ff8a1c"/><path d="M3 10Q0 24 9 30q10 6 18-1-12 2-18-6L8 9 5 6z" fill="#f22d49"/><circle cx="16" cy="15" r="8" fill="#2475dc"/><path d="M18 1q8 3 12 8 4 9 0 16-5 4-9 3 5-5 4-11-5-7-7-16z" fill="#ffdf2f"/><path d="M8 12q6 0 9 4l-5 3 6 3q-4 6-11 1-3-6 1-11z" fill="#ff6d1f"/></svg></div>
    <div class="app"><svg viewBox="0 0 34 34"><path d="M1 33l3-9Q-1 11 9 4q12-7 21 4 6 12-4 21-8 5-16 1z" fill="#fff"/><path d="M4 30l2-6Q2 13 10 7q10-6 17 3 5 10-3 17-7 4-14 1z" fill="#35c45a"/><path d="M11 9l3 1 1 4-2 2q2 4 6 5l2-2 4 2q0 5-5 5Q10 23 9 13q0-3 2-4z" fill="#fff"/></svg></div>
    <div class="app"><span class="adobe ae">Ae</span></div>
    <div class="app run"><span class="adobe ps">Ps</span></div>
    <div class="app run"><span class="adobe ai">Ai</span></div>
    <div class="app on"><svg viewBox="0 0 34 34"><ellipse cx="16" cy="18" rx="7.500" ry="10.500" fill="none" stroke="#d9ea55" stroke-width="5.500"/><path d="M18 22l9 10" stroke="#eef58a" stroke-width="5"/><path d="M30 0Q21 4 17 17l3 2Q29 12 30 0z" fill="#2c7a16"/></svg></div>
    <div class="app run"><svg viewBox="0 0 34 34"><circle cx="17" cy="17" r="17" fill="#4cb883"/><g fill="none" stroke="#e9fff3" stroke-width="1.500"><ellipse cx="17" cy="17" rx="12" ry="4.500" transform="rotate(70 17 17)"/><ellipse cx="17" cy="17" rx="12" ry="4.500" transform="rotate(10 17 17)"/><ellipse cx="17" cy="17" rx="12" ry="4.500" transform="rotate(130 17 17)"/></g></svg></div>
    <svg class="tray" width="216" height="28" viewBox="0 0 216 28" fill="none" stroke="#fff" stroke-width="1.700"><circle cx="15" cy="6" r="4"/><circle cx="6" cy="13" r="3.500"/><path d="M10 17q1-6 5-7 6 1 6 7M1 25q1-7 5-8 5 1 5 8"/><path d="M57 18l7-8 8 8"/><path d="M89 7l5-4 5 4 5-4 5 4-5 4 5 4-5 4-5-4-5 4-5-4 5-4zM94 20l5-3 5 3-5 4z" fill="#fff" stroke="none"/><path d="M124 8h18v13h-18zM143 12v5"/><path d="M127 11h8v7h-8z" fill="#fff" stroke="none"/><path d="M158 10h4l5-5v18l-5-5h-4zM171 11l7 7M178 11l-7 7"/><path d="M197 24Q198 8 214 6M201 24q1-11 13-13M205 24q1-7 9-8M209 24q1-4 5-4"/></svg>
    <div class="lang"><b data-w="27">ESP</b><b data-w="17">ES</b></div>
    <div class="clock"><b data-w="40">11:39</b><b data-w="85">05/07/2018</b></div>
    <svg class="bell" width="26" height="26" viewBox="0 0 26 26" fill="none" stroke="#fff" stroke-width="1.800"><path d="M1 2h23v17h-8l-4 4v-4H1z"/></svg>
    <i class="edge"></i>
  </div>

  <div class="menu main">
    <div><b data-w="111">OpenStreetMap</b></div>
    <div class="tallrow"><svg><use href="#osm"/></svg><b data-w="74">Quick OSM</b></div>
    <div><b data-w="210">Herramientas de investigación</b></div>
    <div><b data-w="201">Herramientas de geoproceso</b></div>
    <div><b data-w="189">Herramientas de geometría</b></div>
    <div class="hot"><b data-w="170">Herramientas de análisis</b></div>
    <div><b data-w="236">Herramientas de gestión de datos</b></div>
  </div>
  <div class="menu sub">
    <div class="hot"><svg><use href="#count"/></svg><b data-w="185">Contar puntos en polígono</b></div>
    <div><svg><use href="#mean"/></svg><b data-w="150">Coordenada(s) media</b></div>
    <div><svg><use href="#inter"/></svg><b data-w="168">Intersecciones de líneas</b></div>
    <div><svg><use href="#calc"/></svg><b data-w="294">Estadísticas básicas para campos de texto</b></div>
    <div><svg><use href="#near"/></svg><b data-w="229">Análisis de vecinos más próximos</b></div>
    <div><svg><use href="#matrix"/></svg><b data-w="129">Matriz de distancia</b></div>
    <div><svg><use href="#calc"/></svg><b data-w="305">Estadísticas básicas para campos numéricos</b></div>
    <div><svg><use href="#list"/></svg><b data-w="141">Listar valores únicos</b></div>
    <div><svg><use href="#sum"/></svg><b data-w="169">Sumar longitud de líneas</b></div>
  </div>
</div>
<script src="script.js"></script>
</body>
</html>
```
FILE: styles.css
```css
* { box-sizing: border-box; }
body {
  margin: 0;
  width: 3508px;
  height: 2480px;
  background: #fff;
  color: #000;
  font-family: "DejaVu Sans Condensed", "DejaVu Sans", sans-serif;
  font-stretch: condensed;
  font-size: 16px;
  overflow: hidden;
}
b, i { font-weight: normal; font-style: normal; white-space: nowrap; }
svg { flex: none; display: block; overflow: visible; }
[data-w] { display: inline-block; white-space: nowrap; }
.defs { width: 0; height: 0; position: absolute; }
.ui { font-family: "DejaVu Sans Condensed", "DejaVu Sans", sans-serif; }

.note {
  height: 453px;
  padding: 199px 0 0 1071px;
  font: 48px/60px "Noto Sans", sans-serif;
  color: #2a3866;
}
.note p { margin: 0; height: 60px; }
.arrow { margin: 18px 0 0 -17px; }

.window {
  position: relative;
  margin-left: 354px;
  width: 2800px;
  height: 1575px;
  display: flex;
  flex-direction: column;
  background: #efefef;
}

.titlebar { height: 35px; background: #fff; display: flex; align-items: center; padding: 0 26px 2px 5px; }
.logo { width: 20px; height: 25px; margin-right: 9px; }
.caption { font: 17px "Open Sans", sans-serif; }
.winbtns { margin-left: auto; width: 150px; }

.menubar { height: 32px; display: flex; align-items: center; padding-left: 2px; }
.menubar span { padding: 0 11px; height: 28px; line-height: 29px; }
.menubar .active { margin: 0 4px; padding: 0 6px; border: 1.500px solid #8b8b8b; background: linear-gradient(#dcdcdc, #cbcbcb); line-height: 26px; border-bottom: 0; }

.toolbar { height: 56px; display: flex; align-items: center; border-top: 1.500px solid #b6b6b6; padding-left: 7px; }
.toolbar.second { height: 56px; }
.toolbar.third { height: 57px; border-top-width: 2px; border-bottom: 1.500px solid #b6b6b6; }
.toolbar svg { width: 34px; height: 34px; margin: 0 8.500px; }
.toolbar svg.tall { height: 38px; }
.toolbar svg.pressed { width: 50px; height: 49px; margin: 0 .5px; padding: 7px; border: 1.500px solid #8a8a8a; border-radius: 4px; background: linear-gradient(#cfcfcf, #e3e3e3); }
.handle {
  flex: none; width: 8px; height: 42px; margin-right: 1px;
  background:
    radial-gradient(circle at 2px 2px, #b9b9b9 1.300px, transparent 1.800px) 0 0 / 9px 7.300px,
    radial-gradient(circle at 6px 5px, #b9b9b9 1.300px, transparent 1.800px) 0 0 / 9px 7.300px,
    radial-gradient(circle at 3.500px 3.500px, #fff 1.300px, transparent 1.800px) 0 0 / 9px 7.300px;
}
.handle.mid { margin: 0 1px 0 12px; }
.handle.mid2 { margin: 0 1px 0 10px; }
.handle.mid3 { margin: 0 3px 0 9px; }
.gap1 { flex: none; width: 308px; }
.gap2 { flex: none; width: 327px; }
.dd { flex: none; width: 17.500px; height: 8px; }
.dd::before { content: ""; display: block; width: 14px; height: 8px; background: #000; clip-path: polygon(0 0, 100% 0, 50% 100%); }
.dd.off::before { background: #9a9a9a; }

.body { flex: 1; display: flex; min-height: 0; }
.side { width: 76px; border-right: 2px solid #b7b7b7; padding: 10px 0 0 7px; }
.side div { height: 49.700px; display: flex; align-items: center; gap: 9px; padding-left: 5px; }
.side svg { width: 35px; height: 35px; }
.side .dd::before { width: 13px; height: 7px; }
.hdots {
  display: block; height: 8px; width: 62px;
  background:
    radial-gradient(circle at 2px 6px, #bdbdbd 1.200px, transparent 1.700px) 0 0 / 7.300px 8px,
    radial-gradient(circle at 5px 2px, #bdbdbd 1.200px, transparent 1.700px) 0 0 / 7.300px 8px,
    radial-gradient(circle at 3.500px 7px, #fff 1.200px, transparent 1.700px) 0 0 / 7.300px 8px;
}
.side .last { margin-top: 14px; }

.docks { width: 481px; padding: 4px 2px 0 1px; display: flex; flex-direction: column; font-size: 14.500px; }
.dock-title { height: 23px; display: flex; align-items: center; padding: 1px 0 0 4px; gap: 21px; }
.dock-title .hdots { width: 131px; }
.layers-title { padding-left: 3px; padding-top: 0; gap: 14px; height: 25px; margin-top: 1px; }
.layers-title .hdots { width: 157px; }
.layers-title svg { margin-left: -14px; }
.tools { height: 50px; display: flex; align-items: center; gap: 17.700px; padding: 0 0 0 11px; }
.layers-title + .tools { height: 48px; padding-top: 2px; }
.tools svg { width: 22px; height: 22px; }
.tools .tight { margin-right: -10px; }
.tools .dd { width: 14px; margin-right: -6px; }

.tree { width: 478px; background: #fff; border: 2px solid #b4b4b4; border-radius: 3px; font-size: 16px; }
.browser { height: 440px; padding-top: 2px; }
.layers { flex: 1; border: 3px solid #2d87d8; border-radius: 2px; font-weight: bold; font-size: 15.500px; padding-top: 2px; }
.row { position: relative; height: 23.300px; display: flex; align-items: center; padding-left: 33px; }
.layers .row { padding-left: 33px; }
.row b { margin-left: 8px; line-height: 24px; padding-top: 1px; }
.row svg { width: 23px; height: 23px; }
.row::before { content: ""; position: absolute; left: 13px; top: 0; width: 16px; height: 100%; border-left: 1.500px dotted #999; background: linear-gradient(90deg, #aaa 50%, transparent 50%) 0 50% / 4px 1px repeat-x; }
.row.end::before { height: 50%; background-position: 0 100%; }
.row.exp::after { content: "+"; position: absolute; left: 7px; top: 4px; width: 13px; height: 13px; border: 1.500px solid #888; border-radius: 2px; background: #fafafa; font: 14px/9px "DejaVu Sans", sans-serif; text-align: center; }
.splitter { height: 8px; width: 148px; margin: 3px 0 0 160px; background: radial-gradient(circle at 3px 3px, #b9b9b9 1.200px, transparent 1.700px) 0 0 / 7.300px 8px; }

.chk { flex: none; width: 18px; height: 18px; border: 1px solid #b9b9b9; background: #f6f6f6; display: flex; align-items: center; justify-content: center; }
.chk::before { content: ""; width: 12px; height: 12px; background: #000; clip-path: polygon(0 8%, 32% 0, 50% 26%, 68% 0, 100% 8%, 76% 50%, 100% 92%, 68% 100%, 50% 74%, 32% 100%, 0 92%, 24% 50%); }
.chk.off::before { content: none; }
.layers .row svg { margin-left: 9px; height: 20px; }
.sym { flex: none; width: 23px; height: 23px; margin-left: 9px; border: 1px solid #888; background: #fff; }
.sym.green { background: #b0f1a8; border-color: #4d6b49; }
.sym.dash { border: 1px dashed #bbb; }
.sym.dot { width: 11px; height: 11px; margin: 0 6px 0 15px; border-radius: 50%; background: #d9a03a; border: 1.500px solid #6e5a3a; }
.sym.dot.pink { background: #bf7f80; border-color: #8a6a6a; }
.layers .row b { font-weight: bold; margin-left: 9px; }
.layers .row .current { height: 23px; flex: 1; margin-left: 6px; border: 1.500px dotted #333; padding: 0 0 0 2px; line-height: 20px; }
.current u { text-decoration: none; border-bottom: 2px solid #000; line-height: 18px; }

.vsplit { width: 9px; display: flex; align-items: center; }
.vsplit i { width: 9px; height: 412px; margin-left: -2px; background: radial-gradient(circle at 4px 3px, #b9b9b9 1.200px, transparent 1.700px) 0 0 / 9px 7.300px; }
.canvas { flex: 1; margin-top: 2px; border: 1.500px solid #b6b6b6; border-top-width: 2px; border-bottom-width: 2px; background: #fff; overflow: hidden; }

.status { height: 45px; display: flex; align-items: center; padding: 3px 0 0 1255px; font-size: 15px; }
.field { height: 30px; display: flex; align-items: center; background: #fff; border: 2px solid #b9b9b9; border-radius: 4px; }
.coord { width: 368px; margin-left: 7px; justify-content: center; }
.track { width: 22px; height: 22px; margin: 0 21px 0 9px; }
.scale { width: 126px; margin-left: 8px; padding-left: 4px; justify-content: space-between; }
.scale .dd { width: 20px; height: 26px; border-left: 1px solid #bbb; padding: 9px 0 0 4px; background: #f3f3f3; }
.scale .dd::before { width: 11px; height: 8px; }
.lock { width: 20px; height: 22px; margin: 0 22px 0 10px; }
.mag { width: 111px; margin: 0 12px 0 6px; padding-left: 6px; justify-content: space-between; }
.rot { width: 111px; margin: 0 9px 0 15px; padding-left: 5px; justify-content: space-between; }
.spin { width: 22px; height: 26px; border-left: 1px solid #bbb; background: linear-gradient(#f3f3f3 48%, #aaa 48%, #aaa 52%, #f3f3f3 52%); padding: 3px 0 0 5px; }
.spin::before { content: ""; display: block; width: 10px; height: 20px; background: #000; clip-path: polygon(50% 0, 100% 28%, 0 28%, 0 72%, 100% 72%, 50% 100%, 0 72%, 0 28%); }
.rep { margin-left: 7px; }
.crs { width: 22px; height: 22px; margin: 0 6px 0 29px; }
.msg { width: 25px; height: 22px; margin-left: 33px; }

.taskbar { height: 58px; background: #362405; display: flex; align-items: center; color: #fff; font-family: "Open Sans", sans-serif; }
.start { width: 26px; height: 25px; margin: 0 22px; }
.search { width: 502px; height: 58px; border-top: 1px solid #bbb; background: #f2f2f2; color: #333; display: flex; align-items: center; padding: 1px 22px 0 14px; font-size: 22px; }
.search b { margin-left: 14px; }
.mic { margin-left: auto; }
.app { width: 71.500px; height: 58px; display: flex; align-items: center; justify-content: center; border-bottom: 3px solid transparent; padding-top: 2px; }
.app svg { width: 34px; height: 34px; }
.app.view { width: 72.500px; padding-right: 4px; }
.app.view svg { width: 24px; height: 25px; }
.app.run { background: linear-gradient(#76b9ed, #76b9ed) 50% 100% / 58px 3px no-repeat border-box; }
.app.on { background: #5f5139; border-bottom-color: #76b9ed; }
.adobe { width: 32px; height: 31px; border: 2.500px solid; font: bold 16px/24px "Open Sans", sans-serif; text-align: center; }
.ae { color: #c98fff; background: #1b0d33; }
.ps { color: #6fb9f7; background: #0a0f45; }
.ai { color: #f79a1c; background: #2b1602; }
.tray { margin-left: auto; }
.lang, .clock { display: flex; flex-direction: column; align-items: center; justify-content: space-around; height: 54px; font-size: 17.500px; line-height: 24px; }
.lang { margin-left: 18px; }
.clock { margin-left: 22px; }
.bell { margin-left: 26px; }
.edge { width: 1px; height: 58px; background: #7a6d55; margin: 0 6px 0 27px; }

.menu { position: absolute; background: #f8f8f8; border: 1.500px solid #8c8c8c; box-shadow: 5px 5px 4px rgba(0, 0, 0, .5); font-size: 15.500px; }
.menu div { display: flex; align-items: center; position: relative; }
.menu b { padding-top: 3px; }
.menu svg { position: absolute; left: 3px; width: 23px; height: 23px; }
.menu .hot { color: #fff; background: linear-gradient(#0a84e6, #0068bd); }
.main { left: 505px; top: 63px; width: 313px; height: 200px; }
.main div { height: 27.700px; padding-left: 36px; }
.main .tallrow { height: 31px; }
.main div::after { content: ""; position: absolute; right: 16px; top: 9px; width: 6px; height: 9px; background: currentColor; clip-path: polygon(0 0, 100% 50%, 0 100%); }
.sub { left: 816px; top: 206px; width: 373px; height: 278px; }
.sub div { height: 30.600px; padding-left: 35px; }
```
FILE: script.js
```js
document.querySelectorAll('[data-w]').forEach(function (el) {
  var want = parseFloat(el.dataset.w);
  var n = el.textContent.length;
  el.style.letterSpacing = ((want - el.getBoundingClientRect().width) / n).toFixed(3) + 'px';
});

// Apartments layer: point clouds scattered inside district shapes.
var seed = 7;
function rnd() {
  seed = (seed * 16807) % 2147483647;
  return seed / 2147483647;
}
var centre = function (p) { return [1560 + p[0] / 2.8, 1120 + p[1] / 2.8]; };
var outer = function (p) { return [1280 + p[0] / 1.3288, 1080 + p[1] / 1.8447]; };
function inside(x, y, poly) {
  var hit = false;
  for (var i = 0, j = poly.length - 1; i < poly.length; j = i++) {
    var a = poly[i], b = poly[j];
    if ((a[1] > y) !== (b[1] > y) && x < (b[0] - a[0]) * (y - a[1]) / (b[1] - a[1]) + a[0]) hit = !hit;
  }
  return hit;
}
var holes = [[[798, 1045], [864, 1045], [864, 1155], [796, 1155]], [[758, 798], [838, 798], [838, 850], [762, 850]],
  [[1198, 892], [1264, 892], [1262, 944], [1200, 946]], [[700, 445], [805, 435], [805, 510], [700, 510]],
  [[378, 1212], [482, 1202], [492, 1253], [390, 1263]], [[840, 1145], [940, 1130], [940, 1165], [840, 1175]],
  [[1150, 690], [1240, 700], [1240, 780], [1150, 780]], [[820, 1340], [880, 1340], [870, 1420], [830, 1420]],
  [[970, 800], [1030, 790], [1030, 850], [970, 850]], [[270, 1250], [315, 1250], [315, 1300], [270, 1300]]];
function fill(str, n, out) {
  var poly = str.trim().split(' ').map(function (s) { return s.split(',').map(Number); });
  var xs = poly.map(function (p) { return p[0]; }), ys = poly.map(function (p) { return p[1]; });
  var x0 = Math.min.apply(0, xs), x1 = Math.max.apply(0, xs), y0 = Math.min.apply(0, ys), y1 = Math.max.apply(0, ys);
  while (n > 0) {
    var x = x0 + rnd() * (x1 - x0), y = y0 + rnd() * (y1 - y0);
    if (!inside(x, y, poly)) continue;
    n--;
    if (holes.some(function (h) { return inside(x, y, h); })) continue;
    out.push(centre([x, y]));
  }
}
var pts = [];
fill('470,470 500,425 560,405 640,410 700,370 750,330 830,345 825,425 715,430 700,500 690,560 640,640 520,610 465,545', 230, pts);
fill('570,650 640,560 700,520 850,505 900,560 1000,550 1060,545 1130,610 1120,700 1090,760 980,800 950,830 800,810 770,850 560,860', 700, pts);
fill('890,500 940,430 915,370 980,340 1000,440 1050,470 1110,455 1180,480 1200,550 1270,610 1270,690 1230,680 1190,600 1130,560 1060,580 960,510', 170, pts);
fill('1010,240 1070,240 1080,330 1115,370 1090,415 1040,400 1035,320', 50, pts);
fill('560,850 770,850 820,880 950,800 960,870 1050,790 1190,790 1250,850 1240,990 1180,1030 1100,1010 1080,1060 1000,1050 940,1130 850,1160 700,1200 540,1100 520,930', 1200, pts);
fill('1240,850 1340,860 1400,880 1440,960 1400,1030 1350,1065 1300,1000 1270,1080 1220,1050 1230,980', 110, pts);
fill('240,1220 330,1140 500,1085 600,1110 780,1200 820,1410 700,1450 580,1450 540,1420 440,1460 310,1460 330,1400 210,1340 125,1260', 760, pts);
fill('790,1150 940,1130 1060,1130 1180,1165 1190,1390 1110,1460 1000,1440 960,1490 880,1440 900,1340 820,1310', 430, pts);
fill('415,915 460,920 540,1010 540,1060 460,1000', 30, pts);
fill('280,1430 420,1440 500,1500 350,1530', 28, pts);

// [x, y, rx, ry, count]
var clusters = [[425, 520, 40, 28, 16], [412, 577, 28, 25, 14], [366, 510, 6, 5, 2], [532, 475, 8, 14, 6], [1130, 425, 32, 36, 38], [1080, 410, 20, 22, 6], [1108, 500, 30, 45, 28],
  [1100, 555, 22, 20, 12], [1128, 602, 42, 27, 30], [1022, 565, 26, 40, 26], [1060, 580, 10, 6, 5], [1040, 868, 28, 35, 28], [985, 905, 16, 34, 12],
  [982, 1063, 18, 20, 18], [1035, 1005, 14, 24, 9], [1000, 1020, 30, 14, 5], [945, 1024, 18, 12, 6], [1025, 1085, 20, 22, 10], [1083, 1145, 20, 38, 16], [1115, 1135, 18, 12, 8],
  [735, 1080, 18, 45, 34], [715, 1160, 18, 35, 18], [738, 1200, 30, 24, 20], [748, 1262, 20, 26, 13], [787, 1255, 6, 35, 9], [675, 1245, 24, 38, 26],
  [697, 1325, 9, 18, 6], [412, 1018, 16, 26, 16], [455, 1060, 26, 20, 12], [492, 1125, 16, 28, 16], [500, 1080, 12, 20, 8], [575, 1050, 40, 34, 30],
  [463, 1002, 8, 24, 6], [535, 1130, 8, 10, 3], [665, 1085, 30, 26, 6], [725, 180, 16, 28, 9], [722, 217, 36, 18, 14], [802, 155, 12, 10, 3],
  [815, 195, 32, 35, 15], [805, 240, 12, 12, 4], [740, 300, 24, 44, 24], [700, 300, 24, 45, 12], [620, 305, 18, 20, 12], [580, 370, 16, 34, 12], [541, 396, 6, 8, 3],
  [1015, 267, 12, 14, 8], [1030, 325, 5, 6, 2], [1187, 290, 2, 5, 2], [455, 905, 22, 24, 22], [485, 945, 26, 36, 30]];
clusters.forEach(function (c) {
  for (var i = 0; i < c[4]; i++) {
    var a = rnd() * 6.2832, r = Math.sqrt(rnd());
    pts.push(outer([c[0] + Math.cos(a) * r * c[2], c[1] + Math.sin(a) * r * c[3]]));
  }
});
var singles = '442,116 730,160 803,150 874,198 918,209 630,272 668,269 683,256 698,263 1077,317 1040,349 951,336 940,355 963,381 1155,373 1169,398 1255,594 1292,756 1089,880 1118,926 934,818 967,861 893,1143 966,1105 1012,1113 1046,1125 240,387 221,411 235,419 271,422 281,449 345,433 366,447 401,470 467,473 577,548 603,592 614,643 512,758 417,941 438,938 732,1374 682,1127 682,1202 461,1135 453,1087 579,1090 610,1073 754,1164 775,1172 666,1291 670,1302 780,1223 857,799 459,880 995,540 1020,1085 401,601 651,301 647,330';
singles.split(' ').forEach(function (s) { pts.push(outer(s.split(',').map(Number))); });
pts.push([1374, 987]);

// Shuffle so that no district is painted on top of its neighbour.
for (var k = pts.length - 1; k > 0; k--) {
  var m = Math.floor(rnd() * (k + 1)), t = pts[k];
  pts[k] = pts[m];
  pts[m] = t;
}

// Where thousands of symbols overlap mostly their outlines remain visible:
// [x, y, spread x, spread y, count], kept to spots that already hold a symbol.
var rings = [];
var dense = [[665, 1050, 36, 66, 1150], [710, 1160, 34, 36, 260], [620, 890, 40, 28, 130], [700, 890, 40, 34, 90], [590, 1010, 30, 40, 80],
  [690, 700, 42, 54, 130], [760, 570, 36, 30, 36], [850, 690, 60, 50, 36], [890, 930, 34, 56, 230], [920, 820, 20, 24, 36], [1110, 890, 54, 54, 70], [1010, 940, 40, 40, 50],
  [450, 1340, 70, 42, 70], [570, 1290, 60, 40, 60], [690, 1350, 60, 46, 60], [740, 1250, 26, 40, 110], [860, 1190, 34, 24, 44], [960, 1240, 44, 44, 80],
  [930, 1380, 36, 40, 30], [1060, 1340, 50, 50, 24], [1050, 700, 50, 60, 24], [230, 1300, 50, 34, 20], [560, 500, 60, 60, 20], [1160, 520, 50, 40, 14]];
dense.forEach(function (d) {
  for (var i = 0; i < d[4]; i++) {
    var r = Math.sqrt(-2 * Math.log(rnd() + 1e-6)), a = rnd() * 6.2832;
    var p = centre([d[0] + Math.cos(a) * r * d[2], d[1] + Math.sin(a) * r * d[3]]);
    var held = pts.some(function (q) { return Math.abs(q[0] - p[0]) < 3 && Math.abs(q[1] - p[1]) < 3; });
    if (held) rings.push(p);
  }
});
fill('245,1212 330,1145 430,1105 560,1080 640,1120 600,1150 430,1150 300,1185', 90, rings);

function circles(list) {
  return list.map(function (p) { return '<circle cx="' + p[0].toFixed(1) + '" cy="' + p[1].toFixed(1) + '" r="5"/>'; }).join('');
}
var symbol = '<g fill="#dca040" stroke="#2b1e08" stroke-width="1.500">';
var last = Math.floor(pts.length * 0.93);
document.getElementById('points').innerHTML =
  symbol + circles(pts.slice(0, last)) + '</g>' +
  '<g fill="none" stroke="#1d1304" stroke-width="1.200">' + circles(rings) + '</g>' +
  symbol + circles(pts.slice(last).filter(function (p) { return Math.hypot(p[0] - 1798, p[1] - 1495) > 30; })) + '</g>';
```
